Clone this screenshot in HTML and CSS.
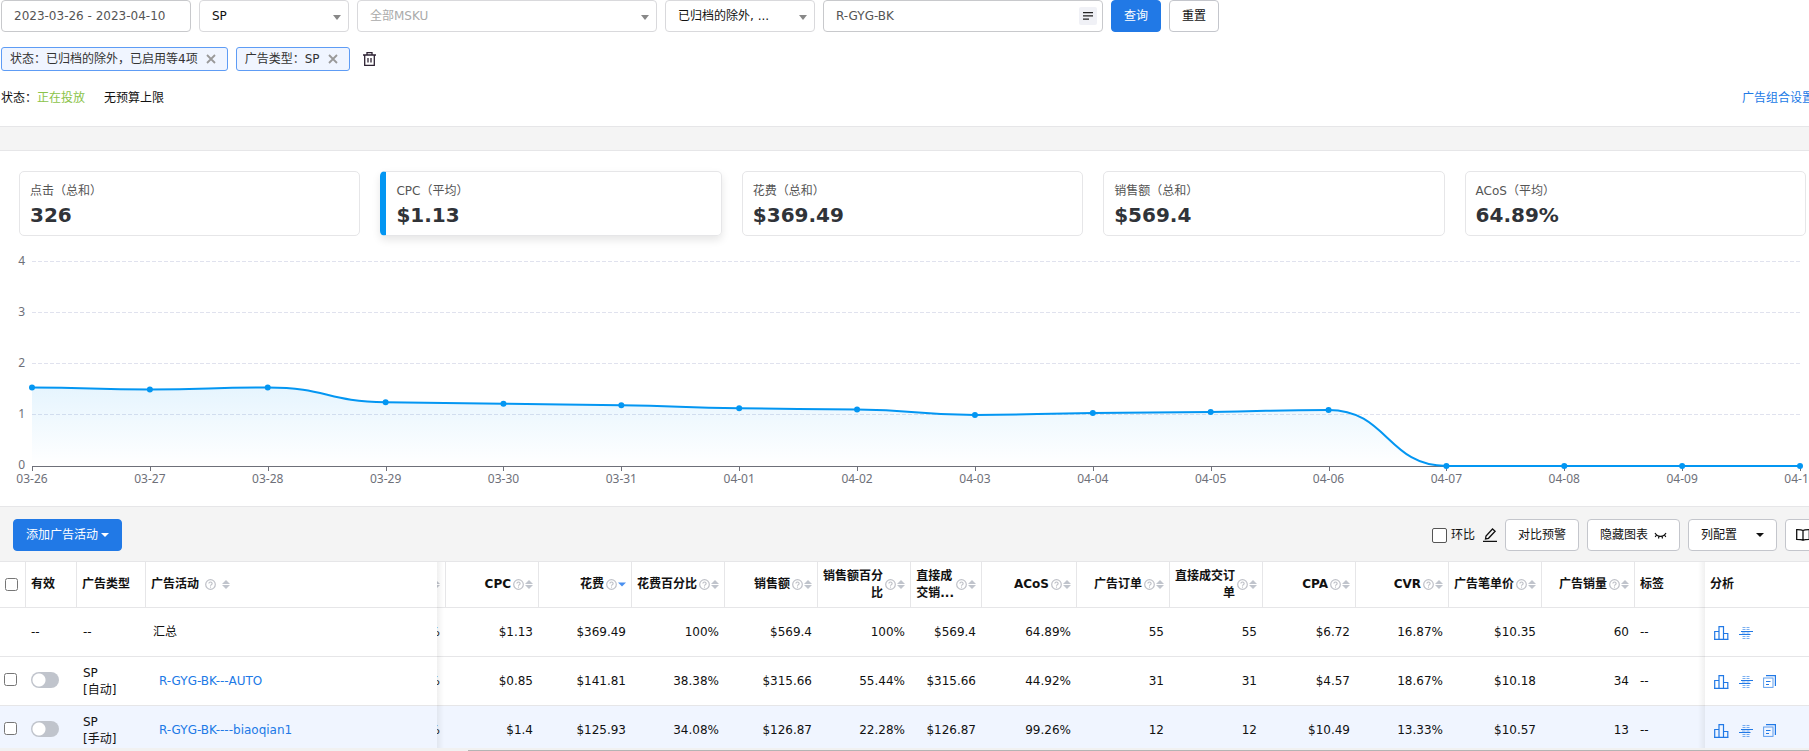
FILE: index.html
```html
<!DOCTYPE html>
<html lang="zh-CN">
<head>
	<meta charset="utf-8">
	<meta name="viewport" content="width=device-width, initial-scale=1.0">
	<title>广告活动</title>
	<link rel="stylesheet" href="styles.css">
</head>
<body>

	<!-- shared icons -->
	<svg class="sprite" aria-hidden="true">
		<symbol id="i-help" viewBox="0 0 11 11">
			<circle cx="5.5" cy="5.5" r="4.8" fill="none" stroke="currentColor" stroke-width="1.2"/>
			<path d="M3.900 4.500a1.600 1.500 0 1 1 2.400 1.300c-.6.3-.8.5-.8 1" fill="none" stroke="currentColor" stroke-width="1.200"/>
			<rect x="5" y="7.500" width="1" height="1.200" fill="currentColor"/>
		</symbol>
		<symbol id="i-sort" viewBox="0 0 8 9">
			<path d="M4 0l4 4H0z"/>
			<path d="M0 5h8L4 9z"/>
		</symbol>
		<symbol id="i-close" viewBox="0 0 10 10">
			<path d="M1 1l8 8M9 1L1 9" stroke="currentColor" stroke-width="1.8" fill="none"/>
		</symbol>
		<symbol id="i-bars" viewBox="0 0 15 14">
			<path d="M.7 13.300V5.500H5M5 13.300V.7h4.500v12.600M9.500 7.500h4.300v5.800M0 13.300h14.500" fill="none" stroke="currentColor" stroke-width="1.200"/>
		</symbol>
		<symbol id="i-hash" viewBox="0 0 14 12">
			<path d="M3.500 .5h3M7.500 .5h3M3.500 2.500h3M7.500 2.500h3M3 6h3.500M7.500 6h3M3.500 9.500h3M7.500 9.500h3M3.500 11.500h3M7.500 11.500h3" fill="none" stroke="currentColor" opacity=".6"/>
			<path d="M2 4.500h12M0 7.500h11.500" fill="none" stroke="currentColor"/>
		</symbol>
		<symbol id="i-copy" viewBox="0 0 13 13">
			<path d="M3 .6h9.400V11" fill="none" stroke="currentColor" stroke-width="1.200"/>
			<rect x=".6" y="3" width="9.400" height="9.400" fill="none" stroke="currentColor" opacity=".7"/>
			<path d="M3 6.500h4.500M3 9.500h3" stroke="currentColor"/>
		</symbol>
	</svg>

	<div class="page">

		<div class="panel filters">
			<form class="filter-row">
				<input class="field date" type="text" aria-label="日期" value="2023-03-26 - 2023-04-10">
				<div class="select w150">
					<select class="field" aria-label="广告类型"><option>SP</option></select>
				</div>
				<div class="select w300">
					<select class="field empty" aria-label="MSKU"><option>全部MSKU</option></select>
				</div>
				<div class="select w150">
					<select class="field" aria-label="状态"><option>已归档的除外, ...</option></select>
				</div>
				<div class="search">
					<input class="field" type="text" aria-label="搜索" value="R-GYG-BK">
					<button class="multi" type="button" aria-label="批量搜索">
						<svg width="10" height="8" viewBox="0 0 10 8"><path d="M0 .7h10M0 3.900h10M0 7.200h6" stroke="#222" stroke-width="1.300"/></svg>
					</button>
				</div>
				<button class="btn primary" type="button">查询</button>
				<button class="btn" type="button">重置</button>
			</form>

			<div class="tag-row">
				<span class="tag">状态：已归档的除外，已启用等4项
					<button type="button" aria-label="移除"><svg width="10" height="10"><use href="#i-close"/></svg></button>
				</span>
				<span class="tag">广告类型：SP
					<button type="button" aria-label="移除"><svg width="10" height="10"><use href="#i-close"/></svg></button>
				</span>
				<button class="trash" type="button" aria-label="清空">
					<svg width="13" height="14" viewBox="0 0 13 14"><path d="M0 3h13M4 3V.7h5V3M1.700 3v10.300h9.600V3M5 6v4.500M8 6v4.500" fill="none" stroke="#2d2233" stroke-width="1.300"/></svg>
				</button>
			</div>

			<div class="status-row">
				<span>状态：<span class="running">正在投放</span></span>
				<span class="budget">无预算上限</span>
				<a href="#">广告组合设置</a>
			</div>
		</div>

		<div class="panel chart-panel">
			<div class="cards">
				<div class="card"><p>点击（总和）</p><strong>326</strong></div>
				<div class="card active"><p>CPC（平均）</p><strong>$1.13</strong></div>
				<div class="card"><p>花费（总和）</p><strong>$369.49</strong></div>
				<div class="card"><p>销售额（总和）</p><strong>$569.4</strong></div>
				<div class="card"><p>ACoS（平均）</p><strong>64.89%</strong></div>
			</div>
			<svg id="chart" class="chart"></svg>
		</div>

		<div class="toolbar">
			<button class="btn primary add" type="button">添加广告活动<i class="caret"></i></button>
			<div class="tools">
				<label class="compare"><input type="checkbox">环比</label>
				<button class="pencil" type="button" aria-label="编辑">
					<svg width="14" height="14" viewBox="0 0 14 14"><path d="M2.500 11L3 8l6.500-7 2.600 2.300L5.500 10.300zM0 13.300h14" fill="none" stroke="#111" stroke-width="1.300"/></svg>
				</button>
				<button class="btn" type="button">对比预警</button>
				<button class="btn" type="button">隐藏图表
					<svg width="13" height="7" viewBox="0 0 12 7"><path d="M.5 1c2.500 4.500 8.500 4.500 11 0M2 3L.7 5M4.500 4.200L4 6.500M7.500 4.200L8 6.500M10 3l1.300 2" fill="none" stroke="#111" stroke-width="1.200"/></svg>
				</button>
				<button class="btn columns" type="button">列配置<i class="caret"></i></button>
				<button class="btn book" type="button" aria-label="帮助">
					<svg width="14" height="12" viewBox="0 0 14 12"><path d="M7 1.500C5.500.6 3 .7.7.7v9.600c2.300 0 4.800 0 6.300 1 1.500-1 4-1 6.300-1V.7C11 .7 8.500.6 7 1.500zM7 1.500v9.800" fill="none" stroke="#111" stroke-width="1.300"/></svg>
				</button>
			</div>
		</div>

		<div class="table-wrap">
			<table>
				<colgroup>
					<col class="c-check"><col class="c-on"><col class="c-type"><col><col class="c-cut">
					<col class="c-num"><col class="c-num"><col class="c-num"><col class="c-num"><col class="c-num">
					<col class="c-direct"><col class="c-acos">
					<col class="c-num"><col class="c-num"><col class="c-num"><col class="c-num"><col class="c-num"><col class="c-num">
					<col class="c-label"><col class="c-tools">
				</colgroup>
				<thead>
					<tr>
						<th><input type="checkbox" aria-label="全选"></th>
						<th>有效</th>
						<th>广告类型</th>
						<th class="name fixed-left"><div class="head">广告活动<svg class="help"><use href="#i-help"/></svg><svg class="sort"><use href="#i-sort"/></svg></div></th>
						<th class="num cut"><div class="head"><svg class="sort"><use href="#i-sort"/></svg></div></th>
						<th class="num"><div class="head"><span>CPC</span><svg class="help"><use href="#i-help"/></svg><svg class="sort"><use href="#i-sort"/></svg></div></th>
						<th class="num"><div class="head"><span>花费</span><svg class="help"><use href="#i-help"/></svg><svg class="sort desc" viewBox="0 0 8 9"><path d="M0 2.500h8l-4 4z"/></svg></div></th>
						<th class="num"><div class="head"><span>花费百分比</span><svg class="help"><use href="#i-help"/></svg><svg class="sort"><use href="#i-sort"/></svg></div></th>
						<th class="num"><div class="head"><span>销售额</span><svg class="help"><use href="#i-help"/></svg><svg class="sort"><use href="#i-sort"/></svg></div></th>
						<th class="num"><div class="head"><span>销售额百分比</span><svg class="help"><use href="#i-help"/></svg><svg class="sort"><use href="#i-sort"/></svg></div></th>
						<th class="num"><div class="head"><span class="two-line">直接成<br>交销...</span><svg class="help"><use href="#i-help"/></svg><svg class="sort"><use href="#i-sort"/></svg></div></th>
						<th class="num"><div class="head"><span>ACoS</span><svg class="help"><use href="#i-help"/></svg><svg class="sort"><use href="#i-sort"/></svg></div></th>
						<th class="num"><div class="head"><span>广告订单</span><svg class="help"><use href="#i-help"/></svg><svg class="sort"><use href="#i-sort"/></svg></div></th>
						<th class="num"><div class="head"><span>直接成交订单</span><svg class="help"><use href="#i-help"/></svg><svg class="sort"><use href="#i-sort"/></svg></div></th>
						<th class="num"><div class="head"><span>CPA</span><svg class="help"><use href="#i-help"/></svg><svg class="sort"><use href="#i-sort"/></svg></div></th>
						<th class="num"><div class="head"><span>CVR</span><svg class="help"><use href="#i-help"/></svg><svg class="sort"><use href="#i-sort"/></svg></div></th>
						<th class="num"><div class="head"><span>广告笔单价</span><svg class="help"><use href="#i-help"/></svg><svg class="sort"><use href="#i-sort"/></svg></div></th>
						<th class="num"><div class="head"><span>广告销量</span><svg class="help"><use href="#i-help"/></svg><svg class="sort"><use href="#i-sort"/></svg></div></th>
						<th class="label">标签</th>
						<th class="fixed-right">分析</th>
					</tr>
				</thead>
				<tbody>
					<tr>
						<td></td>
						<td>--</td>
						<td class="type">--</td>
						<td class="name fixed-left">汇总</td>
						<td class="num cut"><div>%</div></td>
						<td class="num">$1.13</td>
						<td class="num">$369.49</td>
						<td class="num">100%</td>
						<td class="num">$569.4</td>
						<td class="num">100%</td>
						<td class="num">$569.4</td>
						<td class="num">64.89%</td>
						<td class="num">55</td>
						<td class="num">55</td>
						<td class="num">$6.72</td>
						<td class="num">16.87%</td>
						<td class="num">$10.35</td>
						<td class="num">60</td>
						<td>--</td>
						<td class="fixed-right">
							<div class="actions">
								<a href="#" aria-label="分析"><svg width="15" height="14"><use href="#i-bars"/></svg></a>
								<a href="#" aria-label="时段"><svg width="14" height="12"><use href="#i-hash"/></svg></a>
							</div>
						</td>
					</tr>
					<tr>
						<td class="check"><input type="checkbox" aria-label="选择 R-GYG-BK---AUTO"></td>
						<td><input class="switch" type="checkbox" aria-label="有效"></td>
						<td class="type">SP<br>[自动]</td>
						<td class="name fixed-left"><a href="#">R-GYG-BK---AUTO</a></td>
						<td class="num cut"><div>%</div></td>
						<td class="num">$0.85</td>
						<td class="num">$141.81</td>
						<td class="num">38.38%</td>
						<td class="num">$315.66</td>
						<td class="num">55.44%</td>
						<td class="num">$315.66</td>
						<td class="num">44.92%</td>
						<td class="num">31</td>
						<td class="num">31</td>
						<td class="num">$4.57</td>
						<td class="num">18.67%</td>
						<td class="num">$10.18</td>
						<td class="num">34</td>
						<td>--</td>
						<td class="fixed-right">
							<div class="actions">
								<a href="#" aria-label="分析"><svg width="15" height="14"><use href="#i-bars"/></svg></a>
								<a href="#" aria-label="时段"><svg width="14" height="12"><use href="#i-hash"/></svg></a>
								<a href="#" aria-label="复制"><svg width="13" height="13"><use href="#i-copy"/></svg></a>
							</div>
						</td>
					</tr>
					<tr class="hover">
						<td class="check"><input type="checkbox" aria-label="选择 R-GYG-BK----biaoqian1"></td>
						<td><input class="switch" type="checkbox" aria-label="有效"></td>
						<td class="type">SP<br>[手动]</td>
						<td class="name fixed-left"><a href="#">R-GYG-BK----biaoqian1</a></td>
						<td class="num cut"><div>%</div></td>
						<td class="num">$1.4</td>
						<td class="num">$125.93</td>
						<td class="num">34.08%</td>
						<td class="num">$126.87</td>
						<td class="num">22.28%</td>
						<td class="num">$126.87</td>
						<td class="num">99.26%</td>
						<td class="num">12</td>
						<td class="num">12</td>
						<td class="num">$10.49</td>
						<td class="num">13.33%</td>
						<td class="num">$10.57</td>
						<td class="num">13</td>
						<td>--</td>
						<td class="fixed-right">
							<div class="actions">
								<a href="#" aria-label="分析"><svg width="15" height="14"><use href="#i-bars"/></svg></a>
								<a href="#" aria-label="时段"><svg width="14" height="12"><use href="#i-hash"/></svg></a>
								<a href="#" aria-label="复制"><svg width="13" height="13"><use href="#i-copy"/></svg></a>
							</div>
						</td>
					</tr>
				</tbody>
			</table>
		</div>
		<div class="scrollbar"><div class="thumb"></div></div>

	</div>

<script src="script.js"></script>
</body>
</html>
```
FILE: styles.css
```css
*{
	box-sizing: border-box;
}

body{
	margin: 0;
	background: #f4f4f4;
	color: #111;
	font: 12px/18px "DejaVu Sans", "Noto Sans CJK SC", sans-serif;
	overflow: hidden;
}

button, input, select{
	font: inherit;
	color: inherit;
	margin: 0;
}

button{
	padding: 0;
	border: 0;
	background: none;
	cursor: pointer;
}

p{
	margin: 0;
}

a{
	color: #2179e6;
	text-decoration: none;
}

svg{
	display: block;
	flex: none;
}

.sprite{
	position: absolute;
	width: 0;
	height: 0;
}

/* the content is a little wider than the window */
.page{
	display: flex;
	flex-direction: column;
	height: 100vh;
	margin-right: -12px;
}

.panel{
	background: #fff;
	border-bottom: 1px solid #e6e6e8;
	flex: none;
}

/* filters */
.filters{
	padding: 0 7px 19px 1px;
}

.filter-row{
	display: flex;
	gap: 8px;
}

.field{
	width: 100%;
	height: 32px;
	padding: 0 12px;
	border: 1px solid #d9d9dc;
	border-radius: 4px;
	background: #fff;
	outline: 0;
}

input.field{
	border-color: #c8c9cc;
	color: #555;
}

.date{
	width: 190px;
}

select.field{
	appearance: none;
}

select.empty{
	color: #aaa;
}

.select, .search{
	position: relative;
}

.w150{
	width: 150px;
}

.w300{
	width: 300px;
}

.search{
	width: 280px;
}

.select::after{
	content: "";
	position: absolute;
	right: 8px;
	top: 15px;
	border: 4px solid transparent;
	border-top: 5px solid #888;
	border-bottom: 0;
	pointer-events: none;
}

.multi{
	position: absolute;
	right: 6px;
	top: 7px;
	width: 18px;
	height: 18px;
	padding: 0 4px;
	border-radius: 2px;
	background: #f0f1f6;
}

.btn{
	display: flex;
	align-items: center;
	gap: 6px;
	height: 32px;
	padding: 0 12px;
	border: 1px solid #c4c6cc;
	border-radius: 4px;
	background: #fff;
	white-space: nowrap;
}

.primary{
	border-color: #2179e6;
	background: #2179e6;
	color: #fff;
}

.tag-row{
	display: flex;
	align-items: center;
	gap: 8px;
	margin-top: 15px;
}

.tag{
	display: flex;
	align-items: center;
	gap: 8px;
	height: 24px;
	padding: 0 11px 0 8px;
	border: 1px solid #5e9cf5;
	border-radius: 3px;
	background: #f0f5ff;
	color: #333;
}

.tag button{
	color: #999;
}

.trash{
	margin-left: 5px;
}

.status-row{
	display: flex;
	margin-top: 18px;
}

.running{
	color: #8bc34a;
}

.budget{
	margin-left: 19px;
}

.status-row a{
	margin-left: auto;
}

/* cards and chart */
.chart-panel{
	margin-top: 23px;
	padding-top: 20px;
	border-top: 1px solid #e6e6e8;
}

.cards{
	display: grid;
	grid-template-columns: repeat(5, 1fr);
	gap: 20px;
	padding: 0 15px 0 19px;
}

.card{
	height: 65px;
	padding: 10px;
	border: 1px solid #e6e6e8;
	border-radius: 5px;
	color: #555;
}

.card strong{
	display: block;
	font-size: 20px;
	line-height: 30px;
	color: #303338;
}

.active{
	border-left: 6px solid #0396f2;
	box-shadow: 0 4px 8px rgba(0,0,0,.1);
}

.chart{
	width: 100%;
	height: 270px;
	font: 12px "Noto Sans", sans-serif;
}

.chart text{
	fill: #6e7079;
}

.chart .grid{
	stroke: #e0e2ee;
	stroke-dasharray: 4 2;
}

.chart .axis{
	stroke: #6e7079;
}

.chart .line{
	fill: none;
	stroke: #0396f2;
	stroke-width: 2;
}

.chart circle{
	fill: #0396f2;
}

/* toolbar */
.toolbar{
	display: flex;
	justify-content: space-between;
	padding: 12px 0 10px 13px;
	flex: none;
}

.caret{
	border: 4px solid transparent;
	border-top-color: currentColor;
	border-bottom: 0;
}

.add{
	gap: 3px;
}

.tools{
	display: flex;
	align-items: center;
	gap: 8px;
}

.compare{
	display: flex;
	align-items: center;
	gap: 4px;
}

.compare input{
	appearance: none;
	width: 15px;
	height: 15px;
	border: 1px solid #555;
	border-radius: 2px;
	background: #fff;
}

.columns{
	gap: 19px;
}

.book{
	padding: 0 10px;
}

/* table */
.table-wrap{
	flex: 1;
	min-height: 0;
	overflow: hidden;
	background: #fff;
	border-top: 1px solid #e6e6e8;
}

table{
	width: 100%;
	table-layout: fixed;
	border-collapse: separate;
	border-spacing: 0;
	line-height: 17px;
}

.c-check{ width: 26px; }
.c-on{ width: 51px; }
.c-type{ width: 69px; }
.c-cut{ width: 9px; }
.c-num{ width: 93px; }
.c-direct{ width: 71px; }
.c-acos{ width: 95px; }
.c-label{ width: 70px; }
.c-tools{ width: 116px; }

th, td{
	padding: 0 5px;
	border-bottom: 1px solid #e6e6e8;
	text-align: left;
	vertical-align: middle;
}

th{
	height: 46px;
	border-right: 1px solid #e6e6e8;
}

td{
	height: 49px;
	padding-top: 1px;
}

td.num{
	padding-right: 6px;
	text-align: right;
}

td.check{
	padding-left: 4px;
}

td.type{
	padding-left: 6px;
}

td.name{
	padding-left: 7px;
}

.name a{
	margin-left: 6px;
}

.num.cut{
	padding-left: 0;
}

.cut div{
	display: flex;
	justify-content: flex-end;
	overflow: hidden;
}

th.fixed-left, th.label{
	border-right: 0;
}

.hover td{
	background: #f0f5ff;
}

.head{
	display: flex;
	align-items: center;
}

.num .head{
	justify-content: flex-end;
	text-align: right;
}

.head .two-line{
	text-align: left;
}

.help{
	width: 11px;
	height: 11px;
	margin-left: 2px;
	color: #bfc1c8;
}

.sort{
	width: 8px;
	height: 9px;
	margin-left: 1px;
	fill: #c0c4cc;
}

.name .help, .name .sort{
	margin-left: 6px;
}

.desc{
	fill: #4a90f0;
}

table input{
	display: block;
	width: 13px;
	height: 13px;
}

.switch{
	appearance: none;
	width: 28px;
	height: 16px;
	border-radius: 8px;
	background: radial-gradient(circle at 8px 8px, #fff 6px, #c0c4cc 7px);
}

td input{
	margin-bottom: 4px;
}

/* shadow at the edge of the pinned columns */
.fixed-left, .fixed-right{
	position: relative;
}

.fixed-left::after, .fixed-right::before{
	content: "";
	position: absolute;
	top: 0;
	bottom: -1px;
	width: 7px;
}

.fixed-left::after{
	left: 100%;
	background: linear-gradient(to right, rgba(0,0,0,.06), transparent);
}

.fixed-right::before{
	right: 100%;
	background: linear-gradient(to left, rgba(0,0,0,.06), transparent);
}

.actions{
	display: flex;
	align-items: center;
	gap: 10px;
	padding-left: 4px;
}

.scrollbar{
	flex: none;
	height: 3px;
	padding: 2px 0 0 468px;
	background: #f1f1f1;
}

.thumb{
	height: 1px;
	background: #b4b4b4;
}
```
FILE: script.js
```js
var days = ["03-26", "03-27", "03-28", "03-29", "03-30", "03-31", "04-01", "04-02", "04-03", "04-04", "04-05", "04-06", "04-07", "04-08", "04-09", "04-10"];
var cpc = [1.54, 1.5, 1.54, 1.25, 1.22, 1.19, 1.13, 1.11, 1, 1.04, 1.06, 1.1, 0, 0, 0, 0];
var chart = document.getElementById("chart");

// flat at peaks and valleys, otherwise the gentler of both sides
function slope(p, i){
	if(i == 0 || i == p.length - 1){
		return 0;
	}
	var a = p[i][1] - p[i - 1][1];
	var b = p[i + 1][1] - p[i][1];
	if(a * b <= 0){
		return 0;
	}
	return Math.abs(a) < Math.abs(b) ? a : b;
}

function draw(){
	var left = 32;
	var right = chart.clientWidth - 21;
	var bottom = 230;
	var unit = 51;
	var step = (right - left) / (days.length - 1);
	var out = "";
	var p = [];

	for(var v = 0; v <= 4; v++){
		var y = bottom - v * unit;
		out += '<text x="25" y="' + (y + 3) + '" text-anchor="end">' + v + '</text>';
		if(v > 0){
			out += '<path class="grid" d="M' + left + ' ' + (y - 0.5) + 'H' + right + '"/>';
		}
	}
	out += '<path class="axis" d="M' + left + ' ' + (bottom + 0.5) + 'H' + right + '"/>';

	for(var i = 0; i < days.length; i++){
		var x = left + i * step;
		p.push([x, bottom - cpc[i] * unit]);
		out += '<path class="axis" d="M' + (Math.round(x) + 0.5) + ' ' + bottom + 'v5"/>';
		out += '<text x="' + x + '" y="247" text-anchor="middle">' + days[i] + '</text>';
	}

	var line = "M" + p[0];
	for(var j = 1; j < p.length; j++){
		var a = p[j - 1];
		var b = p[j];
		line += "C" + [a[0] + step / 2, a[1] + slope(p, j - 1) / 2, b[0] - step / 2, b[1] - slope(p, j) / 2, b[0], b[1]];
	}

	out += '<linearGradient id="fill" x1="0" y1="0" x2="0" y2="1"><stop offset="0" stop-color="#0396f2" stop-opacity=".1"/><stop offset="1" stop-color="#0396f2" stop-opacity="0"/></linearGradient>';
	out += '<path fill="url(#fill)" d="' + line + 'L' + right + ' ' + bottom + 'H' + left + 'Z"/>';
	out += '<path class="line" d="' + line + '"/>';
	for(var k = 0; k < p.length; k++){
		out += '<circle cx="' + p[k][0] + '" cy="' + p[k][1] + '" r="3"/>';
	}
	chart.innerHTML = out;
}

draw();
window.addEventListener("resize", draw);
```
